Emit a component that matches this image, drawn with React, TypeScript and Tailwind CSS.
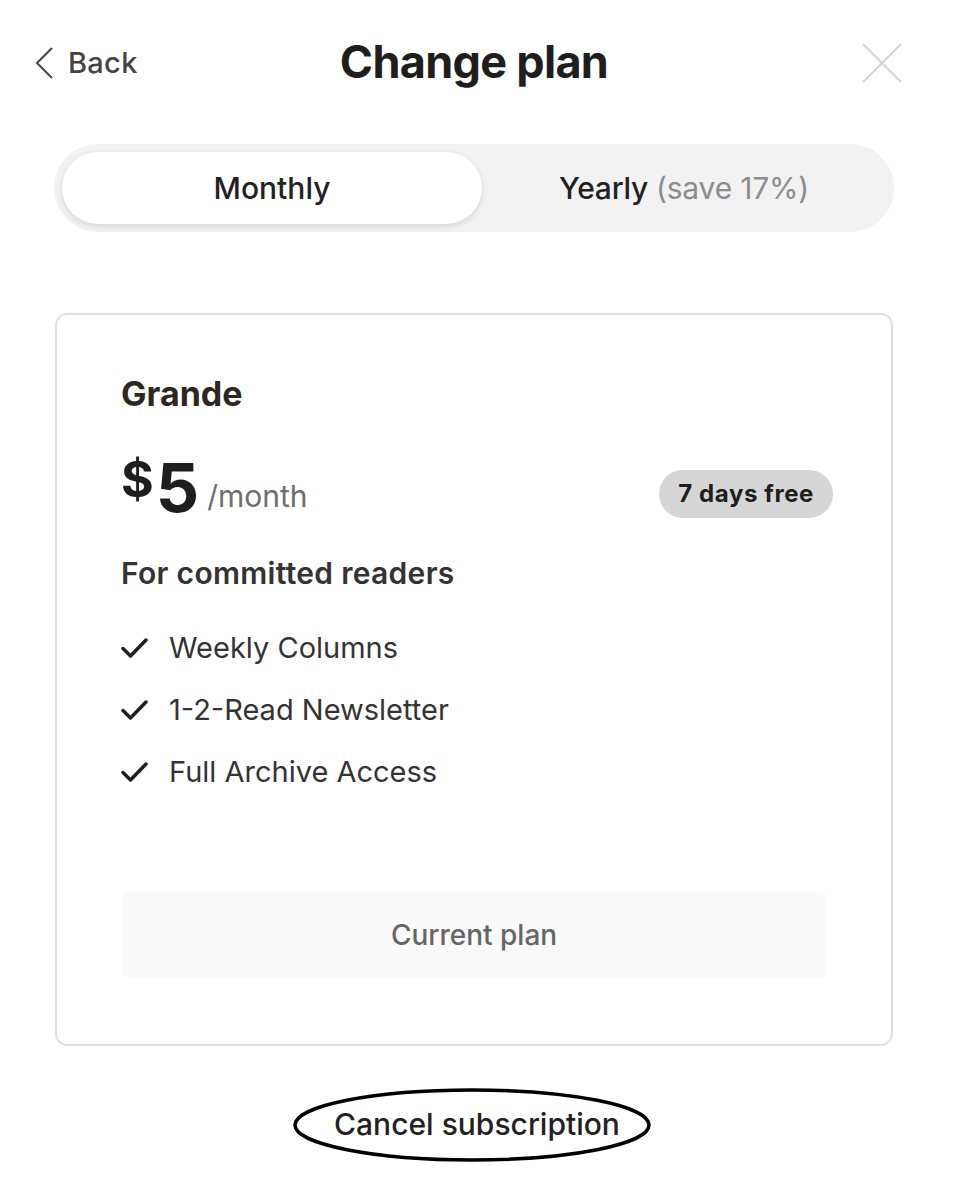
import React, {useState} from "react";

const features = ["Weekly Columns", "1-2-Read Newsletter", "Full Archive Access"];

const Check: React.FC = () => (
    <svg width="28" height="24" viewBox="0 0 28 24" fill="none" className="shrink-0">
        <path d="M2 12.5 L9.5 20 L25 4" stroke="#1f1f1f" strokeWidth="3.5" strokeLinecap="round" strokeLinejoin="round"/>
    </svg>
);

const App: React.FC = () => {
    const [period, setPeriod] = useState<"monthly" | "yearly">("monthly");

    return (
        <div className="w-[954px] min-h-[1200px] bg-white font-['Inter',sans-serif] text-[#222]">
            {/* header */}
            <div className="flex items-center justify-between pl-[34px] pr-[52px] pt-[34px] h-[92px]">
                <button className="flex items-center gap-[14px] w-[172px] text-[#444]">
                    <svg width="20" height="34" viewBox="0 0 20 34" fill="none">
                        <path d="M18 2 L3 17 L18 32" stroke="#444" strokeWidth="2"/>
                    </svg>
                    <span className="text-[29px] font-medium tracking-[0.3px]">Back</span>
                </button>
                <h1 className="text-[45px] font-bold tracking-[-0.7px] text-[#1e1e1e] -mt-[2px]">Change plan</h1>
                <div className="w-[160px] flex justify-end">
                    <svg width="40" height="40" viewBox="0 0 40 40" fill="none">
                        <path d="M1 1 L39 39 M39 1 L1 39" stroke="#d4d4d4" strokeWidth="2"/>
                    </svg>
                </div>
            </div>

            {/* period toggle */}
            <div className="ml-[54px] w-[840px] mt-[52px] h-[88px] rounded-full bg-[#f2f2f2] p-2 flex">
                <button
                    onClick={() => setPeriod("monthly")}
                    className={`w-[420px] rounded-full text-[30px] font-medium ${period === "monthly" ? "bg-white shadow-[0_2px_6px_rgba(0,0,0,0.12)]" : ""}`}
                >
                    Monthly
                </button>
                <button
                    onClick={() => setPeriod("yearly")}
                    className={`flex-1 rounded-full text-[30px] font-medium tracking-[-0.2px] ${period === "yearly" ? "bg-white shadow-[0_2px_6px_rgba(0,0,0,0.12)]" : ""}`}
                >
                    Yearly <span className="font-normal text-[#8c8c8c]">(save 17%)</span>
                </button>
            </div>

            {/* plan card */}
            <div className="ml-[55px] w-[838px] mt-[81px] h-[733px] rounded-[12px] border-2 border-[#e0e0e0] px-[64px] pt-[58px] flex flex-col">
                <h2 className="text-[34px] font-bold text-[#2d2722] leading-[42px]">Grande</h2>

                <div className="mt-[38px] flex items-center justify-between">
                    <div className="flex items-end gap-[8px]">
                        <span className="flex items-start font-bold text-[#1e1e1e] leading-none">
                            <span className="text-[50px] mt-[1px]">$</span>
                            <span className="text-[68px] ml-[2px]">5</span>
                        </span>
                        <span className="text-[30px] text-[#6e6e6e] mb-[2px]">/month</span>
                    </div>
                    <span className="mr-[-6px] mt-[14px] rounded-full bg-[#d6d6d6] px-[19px] h-[48px] flex items-center text-[24px] font-bold tracking-[0.6px] text-[#1e1e1e]">
                        7 days free
                    </span>
                </div>

                <p className="mt-[30px] text-[30px] font-semibold tracking-[0.3px] text-[#333]">For committed readers</p>

                <ul className="mt-[34px] flex flex-col gap-[27px]">
                    {features.map((f) => (
                        <li key={f} className="flex items-center gap-[20px] text-[29px] text-[#333] leading-[35px]">
                            <Check/>
                            {f}
                        </li>
                    ))}
                </ul>

                <button className="mt-auto mb-[66px] h-[86px] rounded-[8px] bg-[#fafafa] text-[28px] font-medium text-[#666]">
                    Current plan
                </button>
            </div>

            {/* cancel */}
            <div className="flex justify-center mt-[44px]">
                <div className="relative py-3">
                    <span className="text-[30px] font-medium text-[#222]">Cancel subscription</span>
                    <svg className="absolute left-[calc(50%-5px)] top-1/2 -translate-x-1/2 -translate-y-1/2 pointer-events-none" width="360" height="76" viewBox="0 0 360 76" fill="none">
                        <ellipse cx="180" cy="38" rx="177" ry="35" stroke="#000" strokeWidth="3.5"/>
                    </svg>
                </div>
            </div>
        </div>
    );
};

export default App;
